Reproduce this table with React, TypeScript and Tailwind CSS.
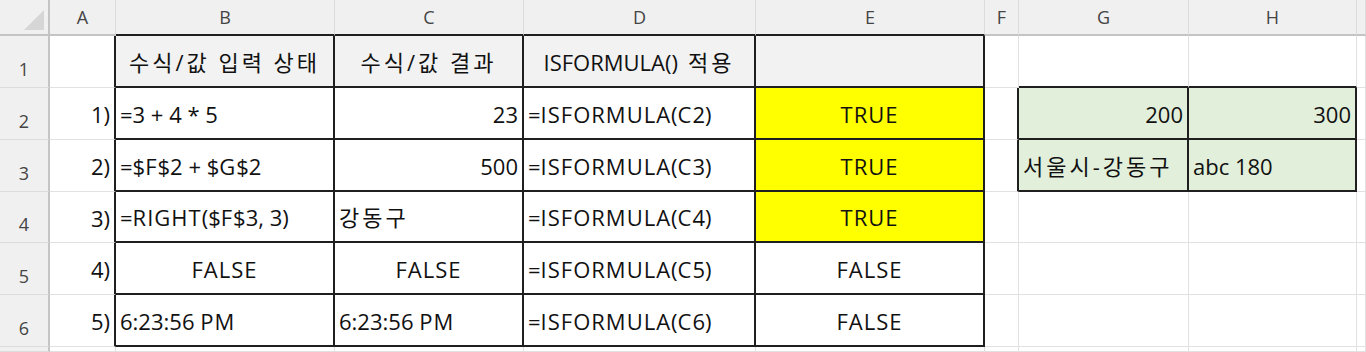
import React from 'react';

type Align = 'left' | 'right' | 'center';

type Cell = {
  text?: string;
  node?: React.ReactNode;
  align?: Align;
  bg?: string;
  r?: boolean; // black right edge
  b?: boolean; // black bottom edge
};

const cols = ['A', 'B', 'C', 'D', 'E', 'F', 'G', 'H', ''];

const T = (text: string, align: Align = 'left', extra: Partial<Cell> = {}): Cell => ({ text, align, r: true, b: true, ...extra });

const rows: Cell[][] = [
  // row 1
  [
    { r: true },
    T('수식/값 입력 상태', 'center', { bg: 'bg-[#f2f2f2]' }),
    T('수식/값 결과', 'center', { bg: 'bg-[#f2f2f2]' }),
    T('ISFORMULA() 적용', 'center', {
      bg: 'bg-[#f2f2f2]',
      node: (
        <span>
          <span>ISFORMULA()</span>
          <span className="ml-[10px] tracking-[3px]">적용</span>
        </span>
      ),
    }),
    T('', 'center', { bg: 'bg-[#f2f2f2]' }),
    {},
    { b: true },
    { b: true },
    {},
  ],
  [
    { text: '1)', align: 'right', r: true },
    T('=3 + 4 * 5'),
    T('23', 'right'),
    T('=ISFORMULA(C2)'),
    T('TRUE', 'center', { bg: 'bg-[#ffff00]' }),
    { r: true },
    T('200', 'right', { bg: 'bg-[#e2efda]' }),
    T('300', 'right', { bg: 'bg-[#e2efda]' }),
    {},
  ],
  [
    { text: '2)', align: 'right', r: true },
    T('=$F$2 + $G$2'),
    T('500', 'right'),
    T('=ISFORMULA(C3)'),
    T('TRUE', 'center', { bg: 'bg-[#ffff00]' }),
    { r: true },
    T('서울시-강동구', 'left', { bg: 'bg-[#e2efda]' }),
    T('abc 180', 'left', { bg: 'bg-[#e2efda]' }),
    {},
  ],
  [
    { text: '3)', align: 'right', r: true },
    T('=RIGHT($F$3, 3)'),
    T('강동구'),
    T('=ISFORMULA(C4)'),
    T('TRUE', 'center', { bg: 'bg-[#ffff00]' }),
    {},
    {},
    {},
    {},
  ],
  [
    { text: '4)', align: 'right', r: true },
    T('FALSE', 'center'),
    T('FALSE', 'center'),
    T('=ISFORMULA(C5)'),
    T('FALSE', 'center'),
    {},
    {},
    {},
    {},
  ],
  [
    { text: '5)', align: 'right', r: true },
    T('6:23:56 PM'),
    T('6:23:56 PM'),
    T('=ISFORMULA(C6)'),
    T('FALSE', 'center'),
    {},
    {},
    {},
    {},
  ],
  // partial row 7
  [{}, {}, {}, {}, {}, {}, {}, {}, {}],
];

// the sheet font sets Hangul and capitals wider than Open Sans / Noto, so space those runs out a bit
function CellText({ text }: { text: string }) {
  const parts = text.split(/([\uac00-\ud7a3]+(?:[ /\-][\uac00-\ud7a3]+)*|[A-Z]+)/);
  return (
    <span>
      {parts.map((p, i) =>
        /[\uac00-\ud7a3]/.test(p) ? (
          <span key={i} className="tracking-[3px]">
            {p}
          </span>
        ) : /^[A-Z]+$/.test(p) ? (
          <span key={i} className="tracking-[1px]">
            {p}
          </span>
        ) : (
          p
        )
      )}
    </span>
  );
}

function GridCell({ cell }: { cell: Cell }) {
  const justify =
    cell.align === 'right' ? 'justify-end' : cell.align === 'center' ? 'justify-center' : 'justify-start';
  return (
    <div
      className={`flex items-center px-[4px] pt-[2px] whitespace-pre overflow-visible ${justify} ${cell.bg ?? 'bg-white'} ${
        cell.r ? 'border-r-2 border-r-[#1f1f1f]' : 'border-r border-r-[#e1e1e1]'
      } ${cell.b ? 'border-b-2 border-b-[#1f1f1f]' : 'border-b border-b-[#e1e1e1]'}`}
    >
      {cell.node ?? (cell.text ? <CellText text={cell.text} /> : null)}
    </div>
  );
}

export default function App() {
  return (
    <div
      className="w-[1366px] h-[352px] overflow-hidden bg-white text-[22px] text-[#111]"
      style={{ fontFamily: '"Open Sans", "Noto Sans CJK KR", sans-serif' }}
    >
      <div className="grid grid-cols-[50px_66px_219px_189px_232px_229px_34px_170px_168px_1fr] grid-rows-[36px_52px_52px_52px_51px_52px_52px_1fr] h-full">
        {/* corner */}
        <div className="relative bg-[#f0f0f0] border-r-2 border-r-[#c4c4c4] border-b-2 border-b-[#c4c4c4]">
          <svg className="absolute left-[24px] top-[10px]" width="20" height="20" viewBox="0 0 20 20">
            <polygon points="20,0 20,20 0,20" fill="#d6d6d6" />
          </svg>
        </div>
        {cols.map((c, i) => (
          <div
            key={c + i}
            className={`flex items-center justify-center bg-[#f0f0f0] text-[18px] text-[#444] border-r border-r-[#dcdcdc] ${
              i >= 1 && i <= 4 ? 'border-b-2 border-b-[#1f1f1f]' : 'border-b-2 border-b-[#c4c4c4]'
            }`}
          >
            {c}
          </div>
        ))}
        {rows.map((row, ri) => (
          <React.Fragment key={ri}>
            <div className="flex items-end justify-center pb-[4px] bg-[#f0f0f0] text-[18px] text-[#444] border-r-2 border-r-[#c4c4c4] border-b border-b-[#dcdcdc]">
              {ri < 6 ? ri + 1 : ''}
            </div>
            {row.map((cell, ci) => (
              <GridCell key={ci} cell={cell} />
            ))}
          </React.Fragment>
        ))}
      </div>
    </div>
  );
}
